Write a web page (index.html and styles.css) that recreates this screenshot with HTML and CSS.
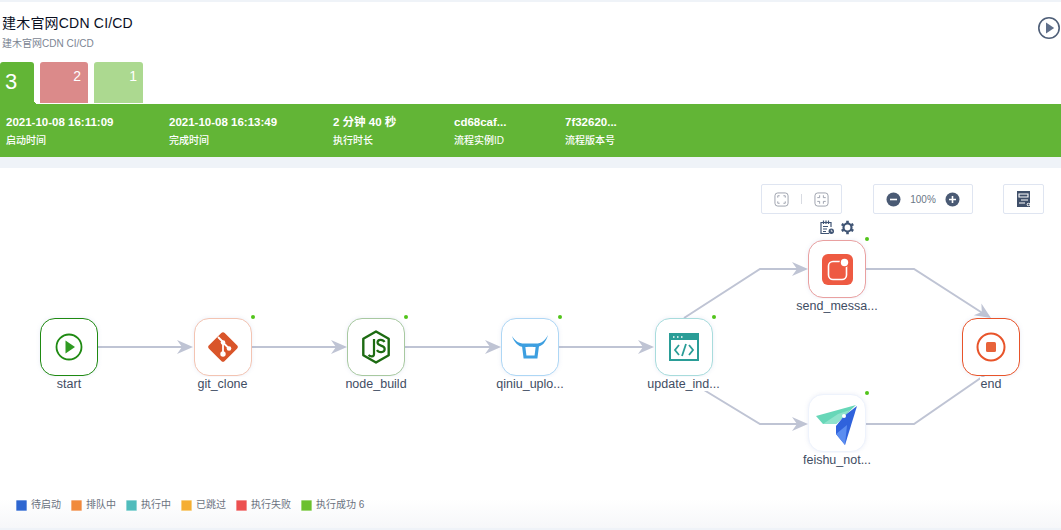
FILE: index.html
```html
<!DOCTYPE html>
<html lang="zh">
<head>
<meta charset="utf-8">
<title>建木官网CDN CI/CD</title>
<link rel="stylesheet" href="styles.css">
</head>
<body>
<div class="page">
  <header class="head">
    <h1 class="title">建木官网CDN CI/CD</h1>
    <p class="subtitle">建木官网CDN CI/CD</p>
    <button class="run" aria-label="run">
      <svg width="24" height="24" viewBox="0 0 24 24"><circle cx="12" cy="12" r="10.2" fill="none" stroke="#4f5f78" stroke-width="1.6"/><path d="M9 6.6 17.2 12 9 17.4Z" fill="#5f6f8a"/></svg>
    </button>
    <div class="tabs">
      <div class="tab tab-active">3</div>
      <div class="tab tab-red">2</div>
      <div class="tab tab-green">1</div>
    </div>
  </header>
  <section class="stats">
    <div class="stat s1"><b>2021-10-08 16:11:09</b><span>启动时间</span></div>
    <div class="stat s2"><b>2021-10-08 16:13:49</b><span>完成时间</span></div>
    <div class="stat s3"><b>2 分钟 40 秒</b><span>执行时长</span></div>
    <div class="stat s4"><b>cd68caf...</b><span>流程实例ID</span></div>
    <div class="stat s5"><b>7f32620...</b><span>流程版本号</span></div>
  </section>
  <main class="canvas">
    <svg class="edges" width="1061" height="362" viewBox="0 168 1061 362">
      <defs>
        <path id="arr" d="M0 0-16-7-11 0-16 7Z" fill="#bfc4d4"/>
      </defs>
      <g fill="none" stroke="#bfc4d4" stroke-width="2">
        <path d="M97 347H185"/>
        <path d="M252 347H339"/>
        <path d="M405 347H493"/>
        <path d="M559 347H646"/>
        <path d="M684 318 760 269H800"/>
        <path d="M704 390 760 424H800"/>
        <path d="M866 269H914L984 314"/>
        <path d="M866 424H914L985 375"/>
      </g>
      <use href="#arr" transform="translate(193 347)"/>
      <use href="#arr" transform="translate(347 347)"/>
      <use href="#arr" transform="translate(501 347)"/>
      <use href="#arr" transform="translate(654 347)"/>
      <use href="#arr" transform="translate(808 269)"/>
      <use href="#arr" transform="translate(808 424)"/>
      <use href="#arr" transform="translate(991 318) rotate(33)"/>
    </svg>

    <div class="toolbar tb-fit">
      <svg width="15" height="15" viewBox="0 0 16 16" fill="none" stroke="#9a9fab"><rect x="1" y="1" width="14" height="14" rx="3"/><path d="M4 6V4H6M10 4H12V6M12 10V12H10M6 12H4V10"/></svg>
      <i class="sep"></i>
      <svg width="15" height="15" viewBox="0 0 16 16" fill="none" stroke="#9a9fab"><rect x="1" y="1" width="14" height="14" rx="3"/><path d="M6 3.500V6H3.500M10 3.500V6H12.500M12.500 10H10V12.500M6 12.500V10H3.500"/></svg>
    </div>
    <div class="toolbar tb-zoom">
      <svg width="15" height="15" viewBox="0 0 15 15"><circle cx="7.500" cy="7.500" r="7" fill="#4a5a74"/><path d="M4 7.500H11" stroke="#fff" stroke-width="1.600"/></svg>
      <span>100%</span>
      <svg width="15" height="15" viewBox="0 0 15 15"><circle cx="7.500" cy="7.500" r="7" fill="#4a5a74"/><path d="M4 7.500H11M7.500 4V11" stroke="#fff" stroke-width="1.600"/></svg>
    </div>
    <div class="toolbar tb-log">
      <svg width="14" height="16" viewBox="0 0 14 16"><path d="M0 0H13V16H0Z" fill="#3f4f69"/><path d="M2 3H11V6H2ZM4 9H11M2 12H8" fill="none" stroke="#fff" stroke-width="1.100"/><circle cx="11.500" cy="13.500" r="1.800" fill="#fff"/><circle cx="11.500" cy="13.500" r="1" fill="#3f4f69"/></svg>
    </div>

    <div class="node-tools">
      <svg width="15" height="15" viewBox="0 0 15 15" fill="none" stroke="#3f5474" stroke-width="1.200"><path d="M9 13.500H1V2.500H11V7"/><path d="M3.500 .5V4M6 .5V4M8.500 .5V4M3 6.500H8M3 9H7M3 11.500H6"/><circle cx="11.300" cy="11.300" r="2.700" fill="#3f5474" stroke="none"/><path d="M11.300 9.800V11.300H12.600" stroke="#fff" stroke-width=".8"/></svg>
      <svg width="15" height="15" viewBox="0 0 15 15" fill="none"><circle cx="7.500" cy="7.500" r="4" stroke="#3f5474" stroke-width="2.200"/><path d="M7.500 .8V3M7.500 12V14.200M1.700 4.100 3.600 5.200M11.400 9.800 13.300 10.900M1.700 10.900 3.600 9.800M11.400 5.200 13.300 4.100" stroke="#3f5474" stroke-width="2.600"/></svg>
    </div>

    <div class="node n-start">
      <div class="box b-start">
        <svg width="28" height="28" viewBox="0 0 28 28"><circle cx="14" cy="14" r="12.500" fill="none" stroke="#1f8a12" stroke-width="1.800"/><path d="M10.500 7.500 20 14 10.500 20.500Z" fill="#2f9a22"/></svg>
      </div>
      <div class="label">start</div>
    </div>
    <div class="node n-git">
      <div class="box b-git">
        <svg width="30" height="30" viewBox="0 0 30 30"><path d="M13.300 1 1 13.300a2.400 2.400 0 0 0 0 3.400L13.300 29a2.400 2.400 0 0 0 3.400 0L29 16.700a2.400 2.400 0 0 0 0-3.400L16.700 1a2.400 2.400 0 0 0-3.400 0Z" fill="#d9552a"/><path d="M10 5 15 10M15 10V22M15.500 11 21 16.500" stroke="#fff" stroke-width="1.800" fill="none"/><circle cx="15" cy="10.500" r="2.300" fill="#fff"/><circle cx="15" cy="22" r="2.700" fill="#fff"/><circle cx="21" cy="16.500" r="2.300" fill="#fff"/></svg>
      </div>
      <div class="label">git_clone</div>
      <i class="dot"></i>
    </div>
    <div class="node n-node">
      <div class="box b-node">
        <svg width="30" height="34" viewBox="0 0 30 34" fill="none"><path d="M15 1.500 27.700 8.800V25.200L15 32.500 2.300 25.200V8.800Z" stroke="#1d6b12" stroke-width="2.400" stroke-linejoin="round"/><path d="M13 9V24C13 27 9.500 27 7.500 25" stroke="#1d6b12" stroke-width="2.200"/><path d="M23.500 12C22 9 16.500 9 16.500 12.500 16.500 16.500 23.700 14.700 23.700 19 23.700 23 17.500 23 16 20" stroke="#1d6b12" stroke-width="2.200"/></svg>
      </div>
      <div class="label">node_build</div>
      <i class="dot"></i>
    </div>
    <div class="node n-qiniu">
      <div class="box b-qiniu">
        <svg width="36" height="24" viewBox="0 0 36 24" fill="none"><path d="M0 1C3 6 7 8.500 12 8.500H24C29 8.500 33 6 36 0 34 7 30 12 24 12H12C6 12 2 7 0 1Z" fill="#3d9fe0"/><path d="M11.500 10 13 22H24L25.500 10" stroke="#3d9fe0" stroke-width="3.200"/><path d="M15.500 12.500H21" stroke="#fff" stroke-width="1.300"/></svg>
      </div>
      <div class="label">qiniu_uplo...</div>
      <i class="dot"></i>
    </div>
    <div class="node n-update">
      <div class="box b-update">
        <svg width="30" height="28" viewBox="0 0 30 28" fill="none"><rect x="1" y="1" width="28" height="26" stroke="#2a9d97" stroke-width="2"/><rect x="1" y="1" width="28" height="6" fill="#2a9d97"/><path d="M4 4H5.500M8 4H9.500M12 4H13.500" stroke="#fff" stroke-width="1.500"/><path d="M10 12 6 17 10 22M20 12 24 17 20 22M17 11 13 23" stroke="#2a9d97" stroke-width="1.800"/></svg>
      </div>
      <div class="label">update_ind...</div>
      <i class="dot"></i>
    </div>
    <div class="node n-send">
      <div class="box b-send">
        <svg width="31" height="31" viewBox="0 0 31 31"><rect width="31" height="31" rx="6" fill="#ee5a42"/><rect x="6.500" y="7.500" width="18" height="18" rx="4.500" fill="none" stroke="#fff" stroke-width="1.600"/><circle cx="22.500" cy="8.500" r="5" fill="#ee5a42"/><circle cx="22.500" cy="8.500" r="3.700" fill="#fff"/></svg>
      </div>
      <div class="label">send_messa...</div>
      <i class="dot"></i>
    </div>
    <div class="node n-feishu">
      <div class="box b-feishu">
        <svg class="feishu-icon" width="42" height="42" viewBox="0 0 42 42"><path d="M0 12 40 1 20 20H7Z" fill="#67d7b8"/><path d="M7 20 22 10 34 6 20 20Z" fill="#8fe3cc"/><path d="M41 2 29 41 20 30V22L28 12Z" fill="#2f62dc"/><path d="M20 30 29 41 31 21Z" fill="#5b8df0"/><circle cx="28" cy="12" r="2" fill="#fff"/></svg>
      </div>
      <div class="label">feishu_not...</div>
      <i class="dot"></i>
    </div>
    <div class="node n-end">
      <div class="box b-end">
        <svg width="30" height="30" viewBox="0 0 30 30"><circle cx="15" cy="15" r="13.500" fill="none" stroke="#e8542a" stroke-width="2"/><rect x="10" y="10" width="10" height="10" rx="1.500" fill="#e8633a"/></svg>
      </div>
      <div class="label">end</div>
    </div>

    <ul class="legend">
      <li><i class="sw c1"></i>待启动</li>
      <li><i class="sw c2"></i>排队中</li>
      <li><i class="sw c3"></i>执行中</li>
      <li><i class="sw c4"></i>已跳过</li>
      <li><i class="sw c5"></i>执行失败</li>
      <li><i class="sw c6"></i>执行成功 6</li>
    </ul>
  </main>
</div>
</body>
</html>
```
FILE: styles.css
```css
* { box-sizing: border-box; }
html, body { margin: 0; padding: 0; }
body {
  width: 1061px;
  height: 530px;
  overflow: hidden;
  background: #eff3f8;
  font-family: "Liberation Sans", "Noto Sans CJK SC", sans-serif;
}
.page { padding-top: 2px; display: flex; flex-direction: column; height: 530px; }
.head { position: relative; height: 102px; background: #fff; padding: 12px 0 0 2px; flex: none; }
.title { margin: 0; font-size: 14px; line-height: 18px; font-weight: 400; color: #0a0f1f; letter-spacing: .2px; }
.subtitle { margin: 5px 0 0; font-size: 10px; line-height: 14px; color: #7b8593; }
.run { position: absolute; top: 14px; right: 0; width: 24px; height: 24px; padding: 0; border: 0; background: none; }
.tabs { display: flex; gap: 6px; position: absolute; left: 0; top: 60px; align-items: flex-start; }
.tab { color: #fff; border-radius: 3px 3px 0 0; }
.tab-active {
  width: 34px; height: 42px; background: #62b536; font-size: 22px; line-height: 40px;
  padding-left: 5px; position: relative;
}
.tab-active::after {
  content: ""; position: absolute; right: -4px; bottom: 0; width: 4px; height: 4px;
  background: radial-gradient(circle at 100% 0, transparent 4px, #62b536 4px);
}
.tab-red, .tab-green { height: 41px; font-size: 14px; line-height: 15px; text-align: right; padding: 7px 7px 0 0; }
.tab-red { width: 48px; background: #db8a8a; }
.tab-green { width: 49px; background: #acd990; padding-right: 6px; }
.stats {
  height: 53px; flex: none; background: #62b536; color: #fff; display: flex; padding: 10px 0 0 6px;
}
.stat { display: flex; flex-direction: column; }
.stat b { font-size: 11.500px; line-height: 16px; font-weight: 700; }
.stat span { font-size: 10px; line-height: 14px; margin-top: 4px; font-weight: 500; }
.s1 { width: 163px; }
.s2 { width: 164px; }
.s3 { width: 121px; }
.s4 { width: 111px; }
.canvas {
  position: relative; margin-top: 11px; flex: 1; background: linear-gradient(#fff 0, #fff 92%, #f6f7f9 100%);
  margin-bottom: 2px;
}
.edges { position: absolute; left: 0; top: 0; }
.toolbar {
  position: absolute; top: 16px; height: 30px; background: #fff; border: 1px solid #dfe5f1; border-radius: 2px;
  display: flex; align-items: center; justify-content: center;
}
.tb-fit { left: 761px; width: 81px; gap: 12px; }
.sep { width: 1px; height: 10px; background: #d8dbe2; }
.tb-zoom { left: 873px; width: 100px; gap: 9px; }
.tb-zoom span { font-size: 10px; color: #6b7686; width: 26px; text-align: center; }
.tb-log { left: 1003px; width: 41px; }
.node-tools { position: absolute; left: 820px; top: 52px; display: flex; gap: 5px; }
.node { position: absolute; width: 58px; display: flex; flex-direction: column; align-items: center; }
.box {
  width: 58px; height: 58px; border-radius: 15px; background: #fff; border: 1px solid #ccc;
  display: flex; align-items: center; justify-content: center; box-shadow: 0 0 4px rgba(120,140,200,.15);
}
.label { font-size: 12.500px; line-height: 14px; margin-top: 1px; color: #3f4d63; white-space: nowrap; background: #fff; padding: 0 1px; }
.dot { position: absolute; top: -3px; right: -3px; width: 4px; height: 4px; border-radius: 50%; background: #52c41a; }
.n-start { left: 40px; top: 150px; }
.n-git { left: 193.500px; top: 150px; }
.n-node { left: 347px; top: 150px; }
.n-qiniu { left: 501px; top: 150px; }
.n-update { left: 654.500px; top: 150px; }
.n-send { left: 808px; top: 72px; }
.n-feishu { left: 808px; top: 226px; }
.n-end { left: 962px; top: 150px; }
.feishu-icon { flex: none; margin: 3px 0 0 -1px; }
.b-start { border-color: #1f8a12; }
.b-git { border-color: #f3c4b2; }
.b-node { border-color: #a8c9a0; }
.b-qiniu { border-color: #aed7f5; }
.b-update { border-color: #a8dcdc; }
.b-send { border-color: #e9a0a0; }
.b-feishu { border-color: #eef3fc; }
.b-end { border-color: #e8542a; }
.legend {
  list-style: none; margin: 0; padding: 0; position: absolute; left: 16px; top: 331px;
  display: flex; gap: 10px; font-size: 10px; line-height: 12px; color: #6b7280;
}
.legend li { display: flex; align-items: center; gap: 4px; }
.sw { width: 11px; height: 11px; border-radius: 1px; border: 1px solid transparent; }
.c1 { background: #2e66d0; border-color: #6f97e0; }
.c2 { background: #f18a3c; border-color: #f5b080; }
.c3 { background: #50bcbc; border-color: #90d6d6; }
.c4 { background: #f5ae32; border-color: #f8cf80; }
.c5 { background: #ec5050; border-color: #f39090; }
.c6 { background: #6cc02e; border-color: #a0d878; }
```
